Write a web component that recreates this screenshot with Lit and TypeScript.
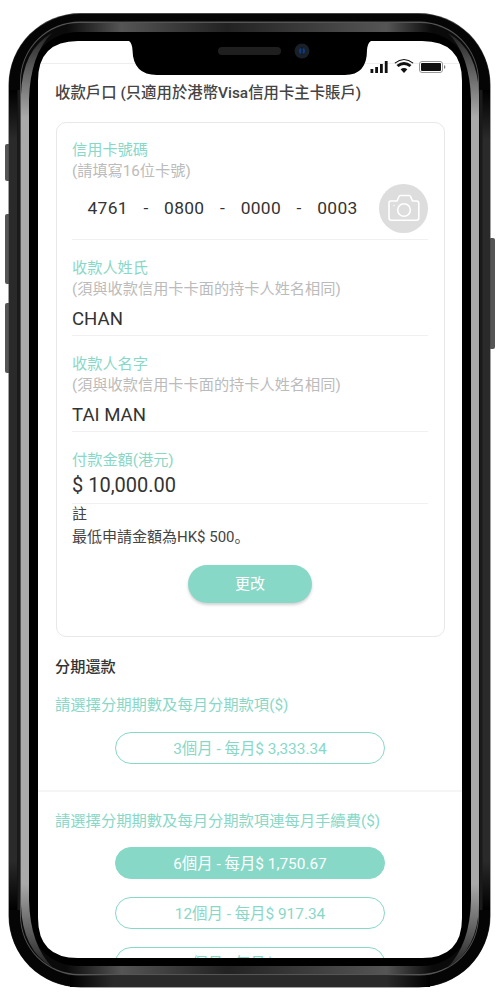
import { LitElement, html, css, svg } from "lit";
import { customElement } from "lit/decorators.js";

const screenPath =
  "M78 41 L129 41 Q132 43 132.5 50 Q133 75 157 75 L345 75 Q367 75 367 50 Q367.5 43 371 41 L422 41 Q462 41 462 81 L462 918 Q462 958 422 958 L78 958 Q38 958 38 918 L38 81 Q38 41 78 41 Z";

const frame = svg`
<svg class="frame" viewBox="0 0 500 1000" width="500" height="1000">
  <defs>
    <linearGradient id="band" x1="0" x2="1" y1="0" y2="0">
      <stop offset="0" stop-color="#0a0a0a"/><stop offset="0.1" stop-color="#0a0a0a"/><stop offset="0.22" stop-color="#555"/>
      <stop offset="0.45" stop-color="#222"/><stop offset="0.8" stop-color="#555"/><stop offset="0.9" stop-color="#0a0a0a"/><stop offset="1" stop-color="#0a0a0a"/>
    </linearGradient>
    <linearGradient id="edgeH" x1="0" x2="1" y1="0" y2="0">
      <stop offset="0" stop-color="#000"/><stop offset="0.12" stop-color="#2a2a2a"/>
      <stop offset="0.88" stop-color="#2a2a2a"/><stop offset="1" stop-color="#000"/>
    </linearGradient>
    <linearGradient id="edgeV" x1="0" x2="0" y1="0" y2="1">
      <stop offset="0" stop-color="#000"/><stop offset="0.06" stop-color="#2a2a2a"/>
      <stop offset="0.94" stop-color="#2a2a2a"/><stop offset="1" stop-color="#000"/>
    </linearGradient>
    <linearGradient id="shine" x1="0" x2="0" y1="0" y2="1">
      <stop offset="0" stop-color="#222"/><stop offset="0.09" stop-color="#aaa"/>
      <stop offset="0.91" stop-color="#aaa"/><stop offset="1" stop-color="#222"/>
    </linearGradient>
    <mask id="hole" maskUnits="userSpaceOnUse" x="0" y="0" width="500" height="1000">
      <rect width="500" height="1000" fill="#fff"/>
      <path d="${screenPath}" fill="#000"/>
    </mask>
  </defs>
  <g fill="#555">
    <rect x="5" y="144" width="6" height="37" rx="2"/>
    <rect x="5" y="214" width="6" height="70" rx="2"/>
    <rect x="5" y="303" width="6" height="70" rx="2"/>
    <rect x="489" y="238" width="6" height="111" rx="2"/>
  </g>
  <g mask="url(#hole)">
    <rect x="8.5" y="13" width="482" height="974.5" rx="72" fill="#444"/>
    <rect x="9" y="14" width="481" height="973" rx="71" fill="#050505"/>
    <rect x="9" y="90" width="8.5" height="820" fill="url(#edgeV)"/>
    <rect x="482" y="90" width="8" height="820" fill="url(#edgeV)"/>
    <rect x="70" y="976" width="360" height="11" fill="url(#edgeH)"/>
    <rect x="17.5" y="90" width="3" height="820" fill="#1a1a1a"/>
    <rect x="479.5" y="90" width="3" height="820" fill="#1a1a1a"/>
    <rect x="20" y="21.5" width="459" height="954" rx="60" fill="#555"/>
    <rect x="21" y="23" width="457" height="951" rx="58" fill="url(#band)"/>
    <rect x="29" y="32" width="442" height="934" rx="49" fill="#000"/>
    <path fill="url(#shine)" d="M21 95 Q22 50 52 33 Q30 55 29 100 L29 900 Q30 945 53 968 Q22 950 21 905 Z"/>
    <path fill="url(#shine)" d="M479 95 Q478 50 448 33 Q470 55 471 100 L471 900 Q470 945 447 968 Q478 950 479 905 Z"/>
  </g>
  <rect x="218" y="47" width="63" height="8" rx="4" fill="#1f1f1f"/>
  <circle cx="302" cy="51" r="7.5" fill="#1a2028"/>
  <circle cx="302" cy="51" r="3" fill="#123c78"/>
  <rect x="301.5" y="47" width="1" height="8" fill="#0a0f18"/>
  <g fill="#111">
    <rect x="370.5" y="69" width="2.8" height="4"/>
    <rect x="375.2" y="67" width="2.8" height="6"/>
    <rect x="380" y="64" width="2.8" height="9"/>
    <rect x="384.8" y="61" width="2.8" height="12"/>
    <path d="M404 73 L400.6 69.3 Q404 66.8 407.4 69.3 Z"/>
    <path d="M398.5 67 Q404 62.8 409.5 67 L411.5 65 Q404 59.2 396.5 65 Z" />
    <path d="M395.2 63.6 Q404 56.6 412.8 63.6 L413.5 62.8 Q404 55.4 394.5 62.8 Z"/>
  </g>
  <rect x="419.5" y="61.5" width="23" height="11" rx="2.5" fill="#fff" stroke="#999"/>
  <rect x="421" y="63" width="20" height="8" rx="1" fill="#111"/>
  <rect x="444" y="65.5" width="1.2" height="3" fill="#777"/>
</svg>`;

const camera = html`<svg width="32" height="28" viewBox="0 0 32 28" fill="none" stroke="#fff" stroke-width="1.6" stroke-linejoin="round">
  <path d="M2.5 7 H9 L11 2.5 Q11.3 1.5 12.5 1.5 H21 Q22.2 1.5 22.6 2.5 L24.5 7 H28.5 Q30.8 7 30.8 9.3 V23.8 Q30.8 26.2 28.5 26.2 H3.3 Q1 26.2 1 23.8 V8.5 Q1 7 2.5 7 Z"/>
  <circle cx="16" cy="16" r="6.3"/>
  <circle cx="6" cy="11.5" r="0.7" fill="#fff" stroke="none"/>
</svg>`;

@customElement("app-root")
export class AppRoot extends LitElement {
  static styles = css`
    :host {
      display: block;
      position: relative;
      width: 500px;
      height: 1000px;
      overflow: hidden;
      background: #fff;
      font-family: Roboto, "Noto Sans CJK SC", sans-serif;
      color: #333;
    }
    .frame { position: absolute; left: 0; top: 0; pointer-events: none; }
    .screen {
      margin: 41px 38px 0;
      height: 917px;
      overflow: hidden;
      background: #fff;
    }
    .status {
      height: 23px;
      box-sizing: border-box;
      border-bottom: 1px solid #eee;
      overflow: hidden;
    }
    .title {
      margin: 18px 17px 0;
      font-size: 15.4px;
      line-height: 22px;
      font-weight: 500;
      color: #444;
    }
    .card {
      margin: 18px 17.5px 0;
      height: 515px;
      box-sizing: border-box;
      border: 1px solid #e8e8e8;
      border-radius: 10px;
      padding: 16px 15.5px 0;
      display: flex;
      flex-direction: column;
    }
    .label { font-size: 15.2px; line-height: 22px; color: #88d8c8; }
    .sub { font-size: 15.2px; line-height: 20px; color: #bbb; }
    .field { border-bottom: 1px solid #f0f0f0; }
    .value { font-size: 18.6px; line-height: 34px; color: #333; padding-top: 3px; box-sizing: border-box; height: 34px; }
    .field1 { height: 101px; box-sizing: border-box; }
    .field2 { height: 96px; box-sizing: border-box; padding-top: 17px; }
    .field3 { height: 96px; box-sizing: border-box; padding-top: 17px; }
    .field4 { height: 72px; box-sizing: border-box; padding-top: 17px; }
    .field4 .value { line-height: 28px; font-size: 20px; padding-top: 0; height: 28px; }
    .num-row { display: flex; align-items: center; gap: 15.6px; margin-top: 2px; padding-left: 15.5px; }
    .num-row span { font-size: 17.4px; line-height: 50px; letter-spacing: 0.3px; }
    .cam {
      width: 49px; height: 49px; border-radius: 50%; background: #ddd;
      display: flex; align-items: center; justify-content: center;
      margin-left: auto; flex: none;
    }
    .note { font-size: 15px; line-height: 23px; color: #444; margin-top: -1px; }
    .change {
      align-self: center;
      margin-top: 16px;
      width: 124px; height: 38px; border-radius: 19px;
      background: #88d8c8; color: #fff;
      font-size: 15px; line-height: 38px; text-align: center;
      box-shadow: 0 2px 3px rgba(0,0,0,0.18);
    }
    .section { margin: 20px 17px 0; font-size: 15.2px; line-height: 20px; font-weight: 500; color: #333; }
    .pick { margin: 17px 17px 0; font-size: 15.3px; line-height: 22px; color: #88d8c8; }
    .pills { display: flex; flex-direction: column; align-items: center; gap: 18px; margin-top: 16px; }
    .pills.later { margin-top: 15px; }
    .pill {
      width: 270px; height: 32px; box-sizing: border-box; flex: none;
      border: 1px solid #88d8c8; border-radius: 16px;
      color: #88d8c8; font-size: 15.4px; line-height: 32px; text-align: center;
    }
    .pill.on { background: #88d8c8; color: #fff; }
    .rule { height: 1.5px; background: #f5f5f5; margin-top: 26px; }
    .pick.second { margin-top: 18px; }
  `;

  render() {
    return html`
      <div class="screen">
        <div class="status"></div>
        <div class="title">收款戶口 (只適用於港幣Visa信用卡主卡賬戶)</div>
        <div class="card">
          <div class="field field1">
            <div class="label">信用卡號碼</div>
            <div class="sub">(請填寫16位卡號)</div>
            <div class="num-row">
              <span>4761</span><span>-</span><span>0800</span><span>-</span><span>0000</span><span>-</span><span>0003</span>
              <div class="cam">${camera}</div>
            </div>
          </div>
          <div class="field field2">
            <div class="label">收款人姓氏</div>
            <div class="sub">(須與收款信用卡卡面的持卡人姓名相同)</div>
            <div class="value">CHAN</div>
          </div>
          <div class="field field3">
            <div class="label">收款人名字</div>
            <div class="sub">(須與收款信用卡卡面的持卡人姓名相同)</div>
            <div class="value">TAI MAN</div>
          </div>
          <div class="field field4">
            <div class="label">付款金額(港元)</div>
            <div class="value">$ 10,000.00</div>
          </div>
          <div class="note">註<br />最低申請金額為HK$ 500。</div>
          <div class="change">更改</div>
        </div>
        <div class="section">分期還款</div>
        <div class="pick">請選擇分期期數及每月分期款項($)</div>
        <div class="pills">
          <div class="pill">3個月 - 每月$ 3,333.34</div>
        </div>
        <div class="rule"></div>
        <div class="pick second">請選擇分期期數及每月分期款項連每月手續費($)</div>
        <div class="pills later">
          <div class="pill on">6個月 - 每月$ 1,750.67</div>
          <div class="pill">12個月 - 每月$ 917.34</div>
          <div class="pill">24個月 - 每月$ 500.67</div>
        </div>
      </div>
      ${frame}
    `;
  }
}
